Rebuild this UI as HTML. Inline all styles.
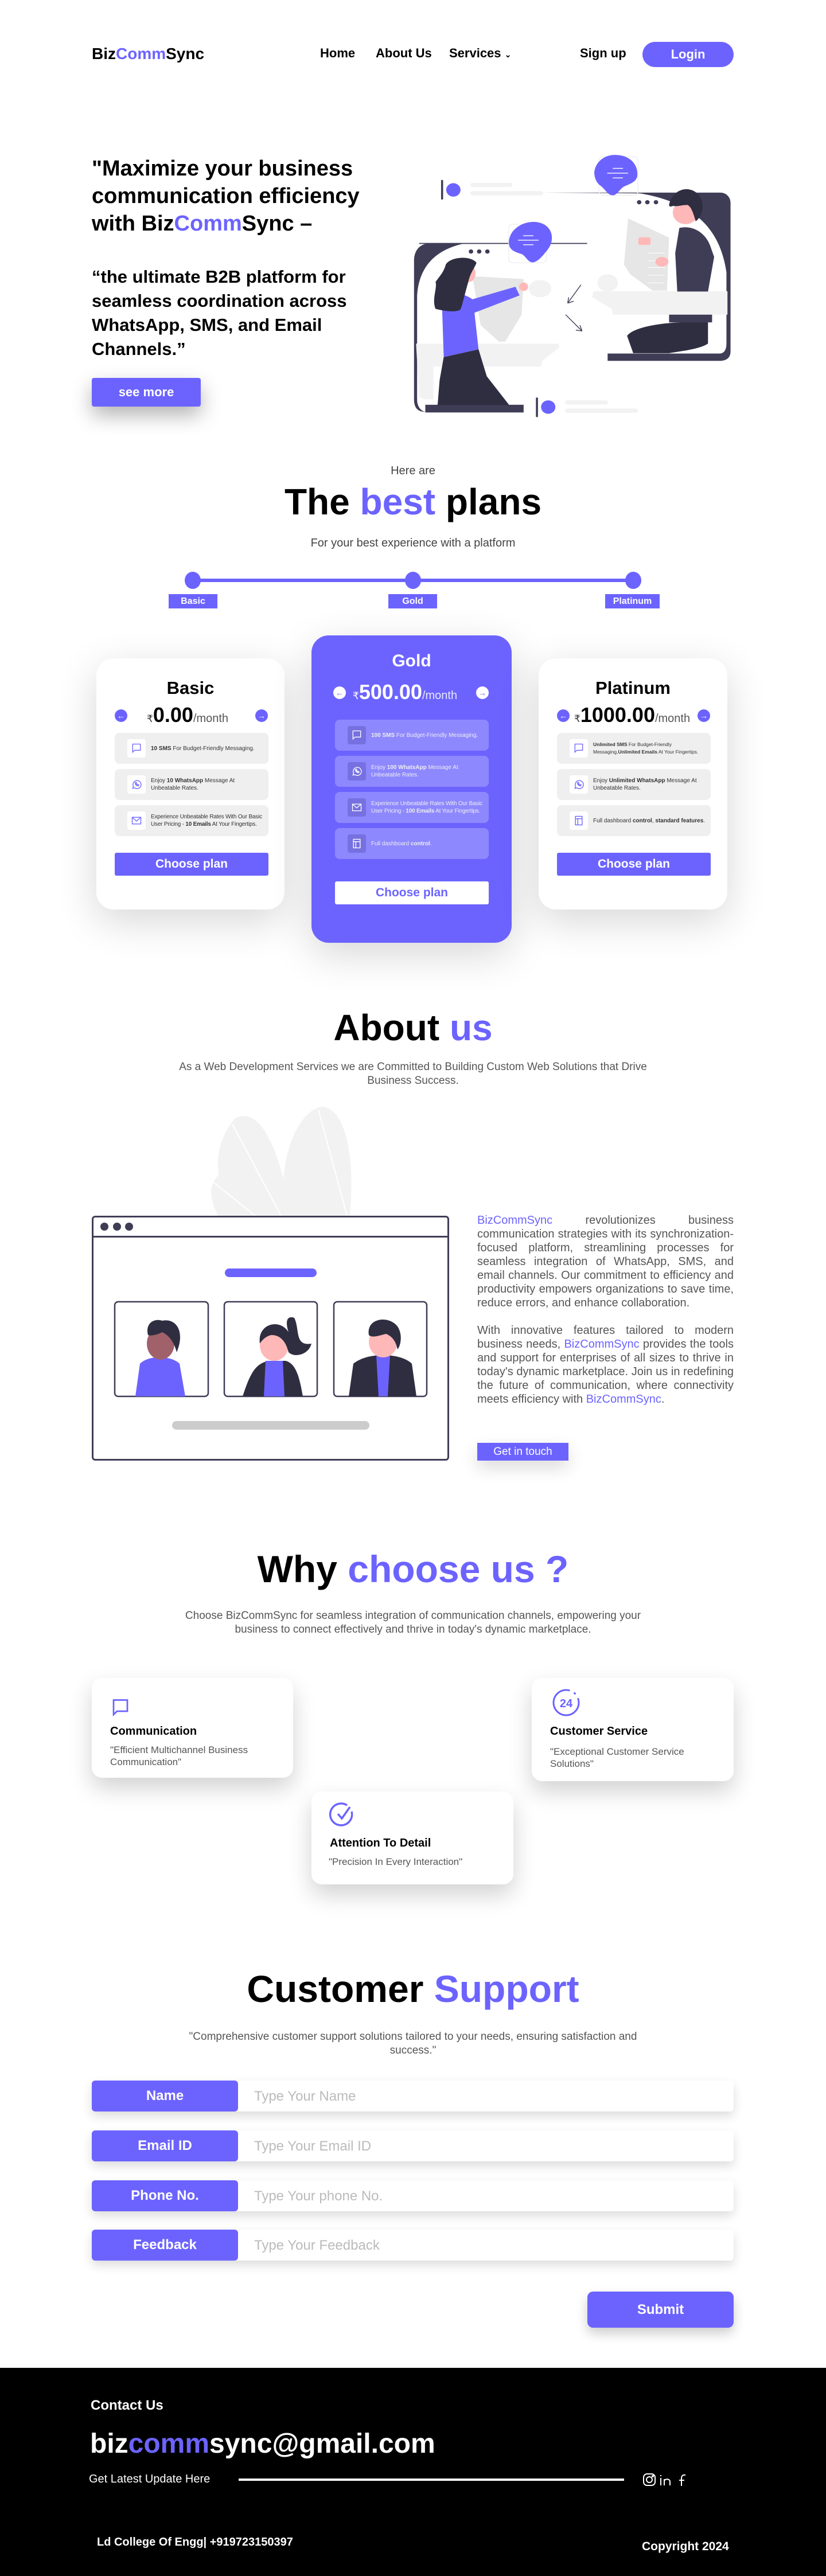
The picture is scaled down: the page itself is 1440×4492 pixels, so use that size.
<!DOCTYPE html>
<html><head><meta charset="utf-8">
<style>
*{margin:0;padding:0;box-sizing:border-box}
body{width:1440px;height:4492px;position:relative;background:#fff;font-family:"Liberation Sans",Arial,sans-serif;color:#000;overflow:hidden}
.a{position:absolute}
.p{color:#6c63ff}
.c{text-align:center}
.nav{font-size:22px;font-weight:bold;top:80px}
.btn{background:#6c63ff;color:#fff;font-weight:bold;display:flex;align-items:center;justify-content:center}
.card{background:#fff;border-radius:30px;box-shadow:0 20px 70px rgba(0,0,0,.16)}
.feat{background:#efefef;border-radius:8px;height:54px;display:flex;align-items:center;padding-left:22px;font-size:10px;color:#333;line-height:13px}
.feat .ic{width:32px;height:32px;background:#fff;border-radius:4px;margin-right:9px;flex:none;display:flex;align-items:center;justify-content:center}
.gold .feat{background:#8e88ff;color:#eee}
.gold .feat .ic{background:#7670e0}
.arr{width:22px;height:22px;border-radius:50%;background:#6c63ff;color:#fff;font-size:14px;font-weight:bold;display:flex;align-items:center;justify-content:center}
.wcard{background:#fff;border-radius:18px;box-shadow:0 18px 40px rgba(0,0,0,.18)}
.wt{font-size:20px;font-weight:bold}
.wd{font-size:17px;color:#555;line-height:21px}
.lab{left:160px;width:255px;height:54px;border-radius:6px;font-size:24px}
.inp{left:160px;width:1119px;height:54px;border-radius:6px;background:#fff;box-shadow:0 8px 18px rgba(0,0,0,.14)}
.ph{position:absolute;left:283px;top:14px;font-size:24px;color:#bbb}
</style></head><body>

<!-- header -->
<div class="a" style="left:160px;top:78px;font-size:28px;font-weight:bold">Biz<span class="p">Comm</span>Sync</div>
<div class="a nav" style="left:558px">Home</div>
<div class="a nav" style="left:655px">About Us</div>
<div class="a nav" style="left:783px">Services <span style="font-size:14px">&#8964;</span></div>
<div class="a nav" style="left:1011px">Sign up</div>
<div class="a btn" style="left:1120px;top:73px;width:159px;height:44px;border-radius:22px;font-size:22px">Login</div>

<!-- hero -->
<div class="a" style="left:160px;top:270px;font-size:38px;font-weight:bold;line-height:48px;width:520px">"Maximize your business communication efficiency with Biz<span class="p">Comm</span>Sync –</div>
<div class="a" style="left:160px;top:462px;font-size:31px;font-weight:600;line-height:42px;width:540px">“the ultimate B2B platform for seamless coordination across <b>WhatsApp</b>, <b>SMS</b>, and <b>Email</b> Channels.”</div>
<div class="a btn" style="left:160px;top:659px;width:190px;height:50px;border-radius:4px;font-size:22px;box-shadow:0 15px 35px rgba(0,0,0,.3)">see more</div>

<svg class="a" style="left:720px;top:260px" width="560" height="470" viewBox="0 0 1568 1400" preserveAspectRatio="none">
<path d="M30 490 H620 M620 490 H850" stroke="#3f3d56" stroke-width="5"/>
<path d="M60 1365 C20 1365 5 1340 5 1300 V580 C5 520 40 490 80 490 H250 C120 520 30 600 20 760 V1300 C20 1340 40 1360 60 1365Z" fill="#3f3d56"/>
<rect x="60" y="1328" width="480" height="40" fill="#3f3d56"/>
<path d="M635 226 H1500 C1530 226 1550 250 1550 280 V1050 C1550 1085 1530 1100 1495 1100 H950 V1062 H1495 C1520 1062 1530 1040 1530 1010 V640 C1500 420 1380 280 1110 230 Z" fill="#3f3d56"/>
<rect x="280" y="175" width="205" height="22" rx="11" fill="#f2f2f2"/>
<rect x="280" y="218" width="355" height="22" rx="11" fill="#f2f2f2"/>
<rect x="137" y="160" width="10" height="102" rx="4" fill="#3f3d56"/>
<circle cx="197" cy="212" r="35" fill="#6c63ff"/>
<rect x="742" y="1305" width="210" height="22" rx="11" fill="#f2f2f2"/>
<rect x="742" y="1348" width="356" height="22" rx="11" fill="#f2f2f2"/>
<rect x="600" y="1290" width="10" height="102" rx="4" fill="#3f3d56"/>
<circle cx="660" cy="1340" r="35" fill="#6c63ff"/>
<rect x="908" y="40" width="190" height="200" rx="20" fill="none" stroke="#eee" stroke-width="4"/>
<path d="M985 30 C1060 30 1100 80 1095 140 C1090 170 1060 180 1040 190 C1010 200 1000 240 975 240 C950 240 940 210 915 190 C890 170 885 140 885 120 C890 70 930 30 985 30Z" fill="#6c63ff"/>
<path d="M975 100H1025M948 125H1050M975 150H1025" stroke="#fff" stroke-width="4"/>
<rect x="467" y="390" width="185" height="200" rx="20" fill="none" stroke="#eee" stroke-width="4"/>
<path d="M590 378 C650 380 680 420 678 465 C676 500 660 520 640 545 C620 570 600 590 580 588 C560 585 550 555 530 545 C500 535 470 525 468 490 C465 430 520 378 590 378Z" fill="#6c63ff"/>
<path d="M538 450H588M513 473H613M538 497H588" stroke="#fff" stroke-width="4"/>
<circle cx="283" cy="532" r="11" fill="#3f3d56"/><circle cx="323" cy="532" r="11" fill="#3f3d56"/><circle cx="363" cy="532" r="11" fill="#3f3d56"/>
<circle cx="1104" cy="276" r="11" fill="#3f3d56"/><circle cx="1144" cy="276" r="11" fill="#3f3d56"/><circle cx="1186" cy="276" r="11" fill="#3f3d56"/>
<path d="M15 1010 H710 L715 1030 L630 1100 L625 1130 H100 L100 1300 H60 L30 1290 Z" fill="#f2f2f2"/>
<path d="M880 738 H1535 V860 H975 L970 830 L875 770Z" fill="#f2f2f2"/>
<path d="M290 660 L540 675 L530 860 L450 1000 L420 1000 L330 915 Z" fill="#e6e6e6"/>
<path d="M1050 360 L1250 460 L1240 735 L1170 735 L1060 650 L1030 600 Z" fill="#e6e6e6"/>
<path d="M1145 540H1230M1145 580H1230M1145 615H1230M1145 655H1230M1145 695H1225" stroke="#fff" stroke-width="3"/>
<ellipse cx="950" cy="695" rx="50" ry="45" fill="#f2f2f2"/>
<ellipse cx="620" cy="725" rx="55" ry="45" fill="#f2f2f2"/>
<path d="M150 1080 L320 1040 L360 1180 L470 1330 H120 L130 1200 Z" fill="#2f2e41"/>
<path d="M140 760 C150 740 240 740 290 780 L500 715 L520 760 L300 850 L320 1040 L150 1080 Z" fill="#6c63ff"/>
<circle cx="540" cy="715" r="22" fill="#ffb8b8"/>
<ellipse cx="275" cy="645" rx="30" ry="45" fill="#ffb8b8"/>
<path d="M160 600 C180 560 280 550 310 590 C300 620 280 640 270 690 C250 760 240 820 230 835 C200 850 150 840 110 830 C90 780 120 720 110 690 C130 660 150 640 160 600Z" fill="#2f2e41"/>
<path d="M1045 970 C1080 920 1250 890 1440 900 L1440 1010 C1400 1040 1300 1050 1250 1060 H1075 Z" fill="#2f2e41"/>
<rect x="1250" y="860" width="210" height="40" fill="#3f3d56"/>
<path d="M1300 410 C1350 395 1420 420 1450 500 L1470 560 L1440 740 H1290 L1280 540 Z" fill="#3f3d56"/>
<ellipse cx="1215" cy="585" rx="32" ry="25" fill="#ffb8b8"/>
<rect x="1100" y="458" width="60" height="40" rx="10" fill="#ffb8b8"/>
<ellipse cx="1330" cy="330" rx="62" ry="60" fill="#ffb8b8"/>
<path d="M1250 290 C1260 230 1310 200 1350 210 C1400 220 1430 280 1405 340 C1395 365 1380 375 1380 375 C1370 340 1360 300 1340 290 C1310 290 1290 300 1270 295 C1260 300 1250 300 1250 290Z" fill="#2f2e41"/>
<path d="M820 705 L755 800 M755 800 L785 790 M755 800 L760 770" stroke="#3f3d56" stroke-width="4" fill="none"/>
<path d="M745 860 L825 945 M825 945 L795 940 M825 945 L815 915" stroke="#3f3d56" stroke-width="4" fill="none"/>
</svg>

<!-- plans -->
<div class="a c" style="left:0;width:1440px;top:810px;font-size:20px;color:#444">Here are</div>
<div class="a c" style="left:0;width:1440px;top:838px;font-size:64px;font-weight:bold">The <span class="p">best</span> plans</div>
<div class="a c" style="left:0;width:1440px;top:936px;font-size:20px;color:#444">For your best experience with a platform</div>
<div class="a" style="left:336px;top:1009px;width:768px;height:6px;background:#6c63ff"></div>
<div class="a" style="left:322px;top:997px;width:28px;height:30px;border-radius:50%;background:#6c63ff"></div>
<div class="a" style="left:706px;top:997px;width:28px;height:30px;border-radius:50%;background:#6c63ff"></div>
<div class="a" style="left:1090px;top:997px;width:28px;height:30px;border-radius:50%;background:#6c63ff"></div>
<div class="a btn" style="left:294px;top:1036px;width:85px;height:25px;font-size:16px;font-weight:600">Basic</div>
<div class="a btn" style="left:677px;top:1036px;width:85px;height:25px;font-size:16px;font-weight:600">Gold</div>
<div class="a btn" style="left:1055px;top:1036px;width:95px;height:25px;font-size:16px;font-weight:600">Platinum</div>

<!-- basic card -->
<div class="a card" style="left:168px;top:1148px;width:328px;height:438px"></div>
<div class="a c" style="left:168px;width:328px;top:1182px;font-size:31px;font-weight:bold">Basic</div>
<div class="a arr" style="left:200px;top:1237px">&#8592;</div>
<div class="a arr" style="left:445px;top:1237px">&#8594;</div>
<div class="a" style="left:256px;top:1226px;font-size:17px;color:#333">₹<b style="font-size:36px;color:#000">0.00</b><span style="font-size:20px;color:#555">/month</span></div>
<div class="a" style="left:200px;top:1278px;width:268px">
 <div class="feat"><div class="ic"><svg width="20" height="20" viewBox="0 0 24 24" fill="none" stroke="#6c63ff" stroke-width="1.6"><path d="M4 3h16v13H8l-4 4z"/></svg></div><span><b>10 SMS</b> For Budget-Friendly Messaging.</span></div>
 <div class="feat" style="margin-top:9px"><div class="ic"><svg width="20" height="20" viewBox="0 0 24 24" fill="none" stroke="#6c63ff" stroke-width="1.6"><path d="M4 20l1.5-4A8.5 8.5 0 1 1 8 19z"/><path d="M9 8c0 4 3 7 7 7l1-2-2-1-1 1c-1-.5-2-1.5-2.5-2.5l1-1-1-2z"/></svg></div><span>Enjoy <b>10 WhatsApp</b> Message At<br>Unbeatable Rates.</span></div>
 <div class="feat" style="margin-top:9px;letter-spacing:-.2px"><div class="ic"><svg width="20" height="20" viewBox="0 0 24 24" fill="none" stroke="#6c63ff" stroke-width="1.6"><rect x="3" y="5" width="18" height="14"/><path d="M3 5l9 8 9-8"/></svg></div><span style="white-space:nowrap">Experience Unbeatable Rates With Our Basic<br>User Pricing - <b>10 Emails</b> At Your Fingertips.</span></div>
</div>
<div class="a btn" style="left:200px;top:1487px;width:268px;height:40px;font-size:21px;border-radius:3px">Choose plan</div>

<!-- gold card -->
<div class="a card gold" style="left:543px;top:1108px;width:349px;height:536px;background:#6c63ff">
 <div class="c" style="margin-top:28px;font-size:30px;font-weight:bold;color:#fff">Gold</div>
 <div class="a arr" style="left:38px;top:89px;background:#fff;color:#6c63ff">&#8592;</div>
 <div class="a arr" style="left:287px;top:89px;background:#fff;color:#6c63ff">&#8594;</div>
 <div class="a" style="left:72px;top:78px;font-size:17px;color:#fff">₹<b style="font-size:36px">500.00</b><span style="font-size:20px;color:#e8e8ff">/month</span></div>
 <div class="a" style="left:41px;top:147px;width:268px">
  <div class="feat"><div class="ic"><svg width="20" height="20" viewBox="0 0 24 24" fill="none" stroke="#fff" stroke-width="1.6"><path d="M4 3h16v13H8l-4 4z"/></svg></div><span><b>100 SMS</b> For Budget-Friendly Messaging.</span></div>
  <div class="feat" style="margin-top:9px"><div class="ic"><svg width="20" height="20" viewBox="0 0 24 24" fill="none" stroke="#fff" stroke-width="1.6"><path d="M4 20l1.5-4A8.5 8.5 0 1 1 8 19z"/><path d="M9 8c0 4 3 7 7 7l1-2-2-1-1 1c-1-.5-2-1.5-2.5-2.5l1-1-1-2z"/></svg></div><span>Enjoy <b>100 WhatsApp</b> Message At<br>Unbeatable Rates.</span></div>
  <div class="feat" style="margin-top:9px;letter-spacing:-.2px"><div class="ic"><svg width="20" height="20" viewBox="0 0 24 24" fill="none" stroke="#fff" stroke-width="1.6"><rect x="3" y="5" width="18" height="14"/><path d="M3 5l9 8 9-8"/></svg></div><span style="white-space:nowrap">Experience Unbeatable Rates With Our Basic<br>User Pricing - <b>100 Emails</b> At Your Fingertips.</span></div>
  <div class="feat" style="margin-top:9px"><div class="ic"><svg width="20" height="20" viewBox="0 0 24 24" fill="none" stroke="#fff" stroke-width="1.6"><rect x="5" y="3" width="14" height="18"/><path d="M5 8h14M10 8v13"/></svg></div><span>Full dashboard <b>control</b>.</span></div>
 </div>
 <div class="a btn" style="left:41px;top:429px;width:268px;height:40px;font-size:21px;border-radius:3px;background:#fff;color:#6c63ff">Choose plan</div>
</div>

<!-- platinum card -->
<div class="a card" style="left:939px;top:1148px;width:329px;height:438px"></div>
<div class="a c" style="left:939px;width:329px;top:1182px;font-size:31px;font-weight:bold">Platinum</div>
<div class="a arr" style="left:971px;top:1237px">&#8592;</div>
<div class="a arr" style="left:1216px;top:1237px">&#8594;</div>
<div class="a" style="left:1001px;top:1226px;font-size:17px;color:#333">₹<b style="font-size:36px;color:#000">1000.00</b><span style="font-size:20px;color:#555">/month</span></div>
<div class="a" style="left:971px;top:1278px;width:268px">
 <div class="feat" style="font-size:8.5px;line-height:13px"><div class="ic"><svg width="20" height="20" viewBox="0 0 24 24" fill="none" stroke="#6c63ff" stroke-width="1.6"><path d="M4 3h16v13H8l-4 4z"/></svg></div><span style="white-space:nowrap"><b>Unlimited SMS</b> For Budget-Friendly<br>Messaging,<b>Unlimited Emails</b> At Your Fingertips.</span></div>
 <div class="feat" style="margin-top:9px"><div class="ic"><svg width="20" height="20" viewBox="0 0 24 24" fill="none" stroke="#6c63ff" stroke-width="1.6"><path d="M4 20l1.5-4A8.5 8.5 0 1 1 8 19z"/><path d="M9 8c0 4 3 7 7 7l1-2-2-1-1 1c-1-.5-2-1.5-2.5-2.5l1-1-1-2z"/></svg></div><span>Enjoy <b>Unlimited WhatsApp</b> Message At<br>Unbeatable Rates.</span></div>
 <div class="feat" style="margin-top:9px"><div class="ic"><svg width="20" height="20" viewBox="0 0 24 24" fill="none" stroke="#6c63ff" stroke-width="1.6"><rect x="5" y="3" width="14" height="18"/><path d="M5 8h14M10 8v13"/></svg></div><span style="white-space:nowrap">Full dashboard <b>control</b>, <b>standard features</b>.</span></div>
</div>
<div class="a btn" style="left:971px;top:1487px;width:268px;height:40px;font-size:21px;border-radius:3px">Choose plan</div>

<!-- about -->
<div class="a c" style="left:0;width:1440px;top:1755px;font-size:64px;font-weight:bold">About <span class="p">us</span></div>
<div class="a c" style="left:260px;width:920px;top:1849px;font-size:19px;color:#555;line-height:24px">As a Web Development Services we are Committed to Building Custom Web Solutions that Drive<br>Business Success.</div>
<svg class="a" style="left:360px;top:1930px" width="260" height="192" viewBox="0 0 260 192">
<path d="M55 190 C20 150 0 80 50 20 C90 0 120 60 140 150 L150 190Z" fill="#f2f2f2"/>
<path d="M140 190 C120 120 150 10 200 0 C240 0 260 80 250 190Z" fill="#f2f2f2"/>
<path d="M20 190 C0 150 5 120 40 110 C80 110 110 160 120 190Z" fill="#f2f2f2"/>
<path d="M45 30 L130 190 M195 5 L245 190 M10 130 L85 190" stroke="#fff" stroke-width="2"/>
</svg>
<div class="a" style="left:160px;top:2120px;width:623px;height:427px;border:3px solid #3f3d56;border-radius:6px;background:#fff">
 <div style="height:35px;border-bottom:3px solid #3f3d56;position:relative">
  <span class="a" style="left:12px;top:9px;width:14px;height:14px;border-radius:50%;background:#3f3d56"></span>
  <span class="a" style="left:34px;top:9px;width:14px;height:14px;border-radius:50%;background:#3f3d56"></span>
  <span class="a" style="left:55px;top:9px;width:14px;height:14px;border-radius:50%;background:#3f3d56"></span>
 </div>
 <div class="a" style="left:229px;top:89px;width:160px;height:15px;border-radius:8px;background:#6c63ff"></div>
 <div class="a" style="left:137px;top:355px;width:344px;height:15px;border-radius:8px;background:#ccc"></div>
</div>
<svg class="a" style="left:198px;top:2268px" width="550" height="170" viewBox="0 0 550 170">
<g fill="none" stroke="#3f3d56" stroke-width="2.5"><rect x="2" y="2" width="163" height="165" rx="6"/><rect x="193" y="2" width="162" height="165" rx="6"/><rect x="384" y="2" width="162" height="165" rx="6"/></g>
<path d="M38 167 L46 110 C60 95 100 95 115 110 L125 167Z" fill="#6c63ff"/>
<ellipse cx="82" cy="75" rx="24" ry="28" fill="#a0616a"/>
<path d="M60 60 C55 40 70 30 85 35 C110 30 125 55 110 90 C105 70 95 60 85 55 C75 60 65 62 60 60Z" fill="#2f2e41"/>
<path d="M225 167 C240 120 250 110 270 105 H300 C320 110 325 140 330 167Z" fill="#2f2e41"/>
<path d="M262 167 L265 105 H295 L298 167Z" fill="#6c63ff"/>
<ellipse cx="280" cy="78" rx="25" ry="27" fill="#ffb8b8"/>
<path d="M255 75 C250 40 290 30 305 55 C300 40 300 25 315 30 C325 50 315 80 345 75 C340 95 315 100 305 90 C300 70 290 60 275 60 C265 62 258 70 255 75Z" fill="#2f2e41"/>
<path d="M410 167 L418 110 C430 100 450 95 470 95 C490 95 510 100 520 110 L528 167Z" fill="#2f2e41"/>
<path d="M462 167 L458 95 H482 L478 167Z" fill="#6c63ff"/>
<ellipse cx="470" cy="72" rx="25" ry="27" fill="#ffb8b8"/>
<path d="M445 60 C440 30 480 25 495 45 C505 60 500 80 495 85 C492 70 485 62 475 58 C460 62 450 65 445 60Z" fill="#2f2e41"/>
</svg>
<div class="a" style="left:832px;top:2116px;width:447px;font-size:20px;line-height:24px;color:#555;text-align:justify">
<span class="p">BizCommSync</span> revolutionizes business communication strategies with its synchronization-focused platform, streamlining processes for seamless integration of WhatsApp, SMS, and email channels. Our commitment to efficiency and productivity empowers organizations to save time, reduce errors, and enhance collaboration.<br><br>With innovative features tailored to modern business needs, <span class="p">BizCommSync</span> provides the tools and support for enterprises of all sizes to thrive in today's dynamic marketplace. Join us in redefining the future of communication, where connectivity meets efficiency with <span class="p">BizCommSync</span>.</div>
<div class="a btn" style="left:832px;top:2516px;width:159px;height:31px;font-size:19px;font-weight:normal;box-shadow:0 12px 30px rgba(0,0,0,.15)">Get in touch</div>

<!-- why -->
<div class="a c" style="left:0;width:1440px;top:2698px;font-size:66px;font-weight:bold">Why <span class="p">choose us ?</span></div>
<div class="a c" style="left:250px;width:940px;top:2806px;font-size:19px;color:#555;line-height:24px">Choose BizCommSync for seamless integration of communication channels, empowering your<br>business to connect effectively and thrive in today's dynamic marketplace.</div>
<div class="a wcard" style="left:160px;top:2926px;width:351px;height:174px">
 <svg class="a" style="left:32px;top:34px" width="36" height="36" viewBox="0 0 24 24" fill="none" stroke="#6c63ff" stroke-width="1.8"><path d="M4 3h16v13H8l-4 4z"/></svg>
 <div class="a wt" style="left:32px;top:82px">Communication</div>
 <div class="a wd" style="left:32px;top:115px">"Efficient Multichannel Business<br>Communication"</div>
</div>
<div class="a wcard" style="left:927px;top:2926px;width:352px;height:180px">
 <svg class="a" style="left:34px;top:17px" width="52" height="52" viewBox="0 0 52 52"><circle cx="26" cy="26" r="22" fill="none" stroke="#6c63ff" stroke-width="3" stroke-dasharray="110 8 4 8"/><text x="26" y="34" text-anchor="middle" font-family="Liberation Sans" font-weight="bold" font-size="20" fill="#6c63ff">24</text></svg>
 <div class="a wt" style="left:32px;top:82px">Customer Service</div>
 <div class="a wd" style="left:32px;top:118px">"Exceptional Customer Service<br>Solutions"</div>
</div>
<div class="a wcard" style="left:543px;top:3124px;width:352px;height:162px">
 <svg class="a" style="left:30px;top:17px" width="48" height="48" viewBox="0 0 48 48" fill="none" stroke="#6c63ff" stroke-width="3.5"><path d="M40 18 A19 19 0 1 1 32 7"/><path d="M16 22l7 8 14-20"/></svg>
 <div class="a wt" style="left:32px;top:79px">Attention To Detail</div>
 <div class="a wd" style="left:30px;top:112px">"Precision In Every Interaction"</div>
</div>

<!-- support -->
<div class="a c" style="left:0;width:1440px;top:3430px;font-size:66px;font-weight:bold">Customer <span class="p">Support</span></div>
<div class="a c" style="left:250px;width:940px;top:3540px;font-size:19px;color:#555;line-height:24px">"Comprehensive customer support solutions tailored to your needs, ensuring satisfaction and<br>success."</div>
<div class="a inp" style="top:3628px"><span class="ph">Type Your Name</span></div>
<div class="a btn lab" style="top:3628px">Name</div>
<div class="a inp" style="top:3715px"><span class="ph">Type Your Email ID</span></div>
<div class="a btn lab" style="top:3715px">Email ID</div>
<div class="a inp" style="top:3802px"><span class="ph">Type Your phone No.</span></div>
<div class="a btn lab" style="top:3802px">Phone No.</div>
<div class="a inp" style="top:3888px"><span class="ph">Type Your Feedback</span></div>
<div class="a btn lab" style="top:3888px">Feedback</div>
<div class="a btn" style="left:1024px;top:3996px;width:255px;height:63px;border-radius:10px;font-size:24px;box-shadow:0 10px 20px rgba(0,0,0,.2)">Submit</div>

<!-- footer -->
<div class="a" style="left:0;top:4129px;width:1440px;height:363px;background:#000;color:#fff">
 <div class="a" style="left:158px;top:52px;font-size:24px;font-weight:bold">Contact Us</div>
 <div class="a" style="left:157px;top:105px;font-size:48px;font-weight:bold">biz<span class="p">comm</span>sync@gmail.com</div>
 <div class="a" style="left:155px;top:183px;font-size:20px">Get Latest Update Here</div>
 <div class="a" style="left:416px;top:193px;width:672px;height:4px;background:#fff"></div>
 <svg class="a" style="left:1120px;top:182px" width="90" height="26" viewBox="0 0 90 26" fill="none" stroke="#fff" stroke-width="2"><rect x="2" y="3" width="20" height="20" rx="6"/><circle cx="12" cy="13" r="5"/><circle cx="18" cy="7" r="1" fill="#fff"/><path d="M32 10v13M32 5v2M38 23V12M38 15c2-4 10-4 10 2v6"/><path d="M68 24V11c0-5 3-7 7-6M64 14h9"/></svg>
 <div class="a" style="left:169px;top:293px;font-size:20px;font-weight:bold">Ld College Of Engg| +919723150397</div>
 <div class="a" style="left:1119px;top:300px;font-size:21px;font-weight:bold">Copyright 2024</div>
</div>
</body></html>
